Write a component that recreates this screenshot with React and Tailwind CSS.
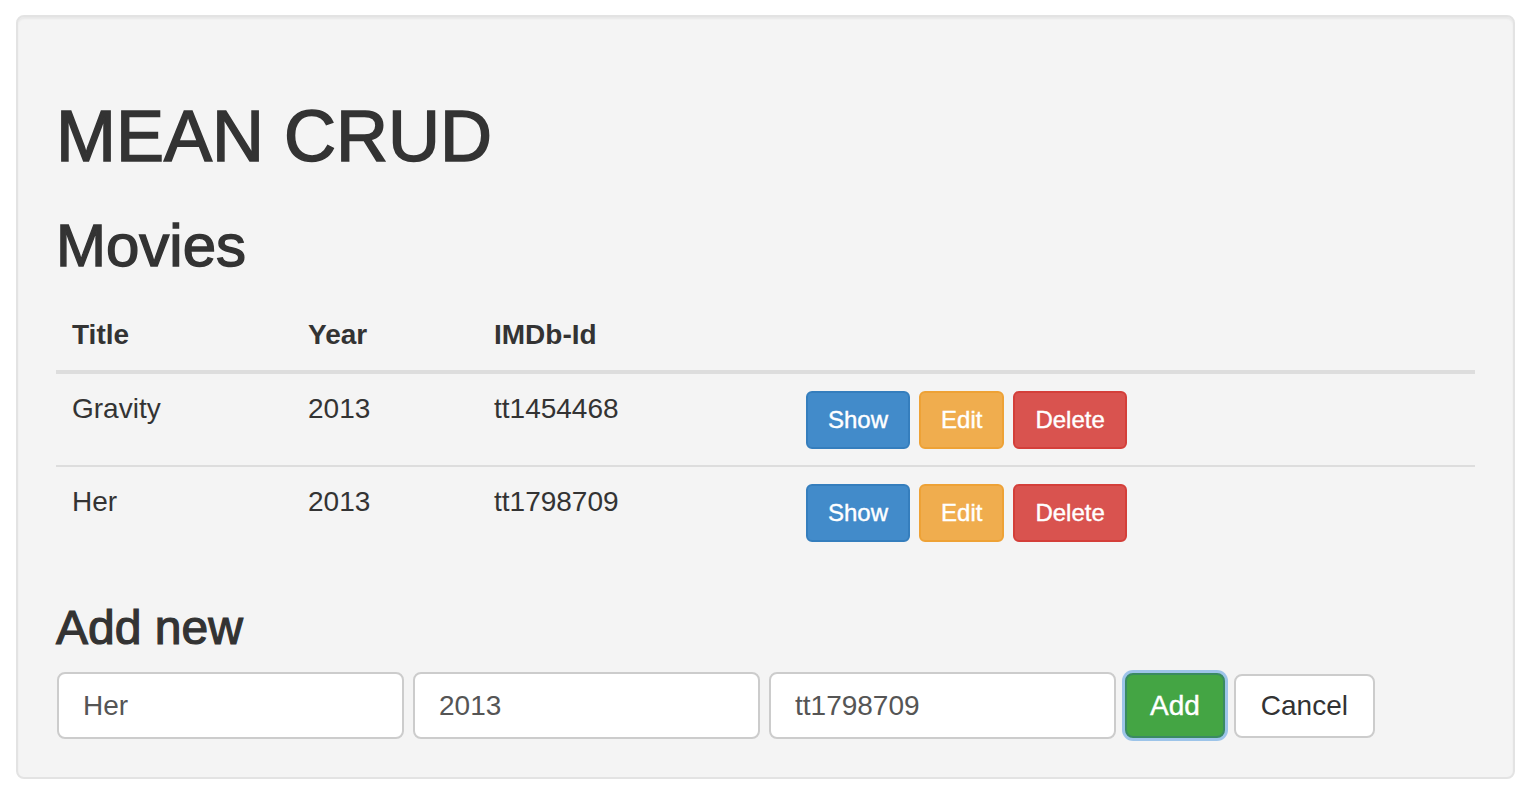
const movies = [
  { title: "Gravity", year: "2013", imdb: "tt1454468" },
  { title: "Her", year: "2013", imdb: "tt1798709" },
];

function RowButton({ color, children }) {
  return (
    <button
      type="button"
      className={`h-[58px] rounded-[6px] border-2 px-[20px] text-[24px] leading-none text-white [-webkit-text-stroke:0.4px_#ffffff] ${color}`}
    >
      {children}
    </button>
  );
}

function MovieRow({ movie, first }) {
  const border = first ? "" : "border-t-2 border-[#dddddd]";
  return (
    <tr>
      <td className={`${border} px-4 pt-[15px] align-top`}>{movie.title}</td>
      <td className={`${border} px-4 pt-[15px] align-top`}>{movie.year}</td>
      <td className={`${border} px-4 pt-[15px] align-top`}>{movie.imdb}</td>
      <td className={`${border} px-4 pt-[17px] pb-4 align-top`}>
        <div className="flex gap-[9px]">
          <RowButton color="bg-[#428bca] border-[#357ebd]">Show</RowButton>
          <RowButton color="bg-[#f0ad4e] border-[#eea236]">Edit</RowButton>
          <RowButton color="bg-[#d9534f] border-[#d43f3a]">Delete</RowButton>
        </div>
      </td>
    </tr>
  );
}

function TextField({ value }) {
  return (
    <input
      type="text"
      defaultValue={value}
      className="h-[67px] w-[347px] rounded-[8px] border-2 border-[#cccccc] bg-white px-[24px] text-[28px] text-[#555555] outline-none"
    />
  );
}

export default function App() {
  return (
    <div className="min-h-screen bg-white px-[16px] pt-[15px] font-['Liberation_Sans',Arial,sans-serif] text-[#333333]">
      <div className="w-[1499px] rounded-[8px] border-2 border-[#e3e3e3] bg-[#f4f4f4] px-[38px] pt-[80px] pb-[38px] shadow-[inset_0_2px_2px_rgba(0,0,0,0.05)]">
        <h1 className="text-[72px] leading-[79px] [-webkit-text-stroke:1.6px_#333333]">MEAN CRUD</h1>
        <h2 className="mt-[37px] mb-[19px] text-[60px] leading-[66px] [-webkit-text-stroke:1.4px_#333333]">Movies</h2>

        <table className="w-full border-collapse text-left text-[28px] leading-[40px]">
          <thead>
            <tr>
              <th className="w-[236px] border-b-4 border-[#dddddd] px-4 pt-[17px] pb-[15px] font-bold">Title</th>
              <th className="w-[186px] border-b-4 border-[#dddddd] px-4 pt-[17px] pb-[15px] font-bold">Year</th>
              <th className="w-[312px] border-b-4 border-[#dddddd] px-4 pt-[17px] pb-[15px] font-bold">IMDb-Id</th>
              <th className="border-b-4 border-[#dddddd] px-4 pt-[17px] pb-[15px]" />
            </tr>
          </thead>
          <tbody>
            {movies.map((movie, i) => (
              <MovieRow key={movie.imdb} movie={movie} first={i === 0} />
            ))}
          </tbody>
        </table>

        <h3 className="mt-[43px] mb-[18px] text-[48px] leading-[53px] [-webkit-text-stroke:1.2px_#333333]">Add new</h3>

        <div className="ml-[1px] flex items-center gap-[9px]">
          <TextField value="Her" />
          <TextField value="2013" />
          <TextField value="tt1798709" />
          <button
            type="button"
            className="h-[65px] rounded-[8px] border-2 border-[#3a8a62] bg-[#44a544] px-[23px] text-[28px] text-white [-webkit-text-stroke:0.4px_#ffffff] shadow-[0_0_0_3px_rgba(128,180,230,0.75)]"
          >
            Add
          </button>
          <button
            type="button"
            className="h-[64px] rounded-[8px] border-2 border-[#cccccc] bg-white px-[25px] text-[28px] text-[#333333]"
          >
            Cancel
          </button>
        </div>
      </div>
    </div>
  );
}
